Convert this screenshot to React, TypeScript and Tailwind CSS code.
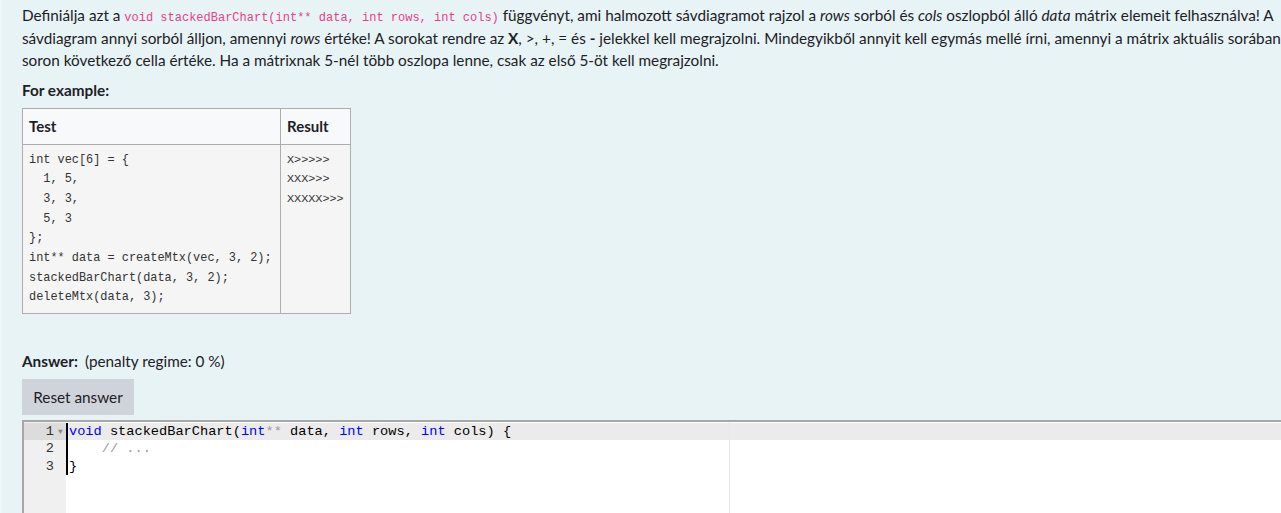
import React from "react";

const body = "font-['Lato','Liberation_Sans',sans-serif]";
const mono = "font-['Liberation_Mono',monospace]";

const testCode = [
  "int vec[6] = {",
  "  1, 5,",
  "  3, 3,",
  "  5, 3",
  "};",
  "int** data = createMtx(vec, 3, 2);",
  "stackedBarChart(data, 3, 2);",
  "deleteMtx(data, 3);",
];

const results = ["X>>>>>", "XXX>>>", "XXXXX>>>"];

const App: React.FC = () => {
  return (
    <div className={`flex h-[513px] w-[1281px] overflow-hidden bg-white ${body}`}>
      <div className="w-[2px] shrink-0 bg-[#eef6f8]" />
      <div className="flex-1 min-w-0 bg-[#e7f3f5] pl-[20px] pt-[4px] text-[#1d2125]">
        {/* question text */}
        <div className="text-[15.3px] leading-[22.5px] whitespace-nowrap">
          <div className="h-[22.5px]">
            Definiálja azt a{" "}
            <code className={`${mono} text-[12px] leading-none text-[#e83e8c]`}>
              void stackedBarChart(int** data, int rows, int cols)
            </code>{" "}
            függvényt, ami halmozott sávdiagramot rajzol a <i>rows</i> sorból és <i>cols</i> oszlopból álló{" "}
            <i>data</i> mátrix elemeit felhasználva! A
          </div>
          <div className="h-[22.5px]">
            sávdiagram annyi sorból álljon, amennyi <i>rows</i> értéke! A sorokat rendre az <b>X</b>, &gt;, +, = és{" "}
            <b>-</b> jelekkel kell megrajzolni. Mindegyikből annyit kell egymás mellé írni, amennyi a mátrix aktuális
            sorában
          </div>
          <div className="h-[22.5px]">
            soron következő cella értéke. Ha a mátrixnak 5-nél több oszlopa lenne, csak az első 5-öt kell megrajzolni.
          </div>
        </div>

        <div className="mt-[8px] text-[15.3px] font-bold leading-[20px]">For example:</div>

        {/* example table */}
        <table className="mt-[8px] border-collapse border border-[#adadad] text-left">
          <thead>
            <tr className="bg-[#f8f9fa]">
              <th className="h-[36px] w-[258px] border border-[#adadad] px-[6px] text-[15px] font-bold">Test</th>
              <th className="h-[36px] w-[70px] border border-[#adadad] px-[6px] text-[15px] font-bold">Result</th>
            </tr>
          </thead>
          <tbody>
            <tr className="bg-[#f5f5f5] align-top">
              <td className="border border-[#adadad] px-[6px] pt-[6px] pb-[5px]">
                <pre className={`${mono} m-0 text-[11.9px] leading-[19.7px] text-[#333]`}>
                  {testCode.join("\n")}
                </pre>
              </td>
              <td className="border border-[#adadad] px-[6px] pt-[6px]">
                <pre className={`${mono} m-0 text-[11.8px] leading-[19.7px] text-[#333]`}>
                  {results.join("\n")}
                </pre>
              </td>
            </tr>
          </tbody>
        </table>

        {/* answer */}
        <div className="mt-[37px] flex items-baseline gap-[7px] text-[15.3px] leading-[20px]">
          <span className="font-bold">Answer:</span>
          <span>(penalty regime: 0 %)</span>
        </div>
        <button className="mt-[8px] h-[36px] w-[112px] bg-[#ced4da] text-[15.3px] text-[#1d2125]">
          Reset answer
        </button>

        {/* code editor */}
        <div className={`mt-[5px] flex h-[100px] border-t-2 border-l-2 border-[#a7a7a7] bg-white ${mono} text-[13.65px] leading-[17.3px]`}>
          <div className="w-[42px] shrink-0 bg-[#f0f0f0] pt-[1px] text-[#333]">
            {[1, 2, 3].map((n) => (
              <div
                key={n}
                className={`flex h-[17.3px] items-center justify-end pr-[1px] ${n === 1 ? "bg-[#dcdcdc]" : ""}`}
              >
                <span>{n}</span>
                <span className="ml-[2px] w-[9px] text-center text-[8px] text-[#888]">{n === 1 ? "▼" : ""}</span>
              </div>
            ))}
          </div>
          <div className="relative flex-1 pt-[1px]">
            <div className="absolute left-0 top-[1px] h-[52px] w-[1.5px] bg-black" />
            <div className="absolute left-[663px] top-0 h-full w-px bg-[#e8e8e8]" />
            <div className="h-[17.3px] whitespace-pre bg-[#ebebeb] pl-[3px] text-black">
              <span className="text-[#0000ff]">void</span> stackedBarChart(<span className="text-[#0000ff]">int</span>
              <span className="text-[#999]">**</span> data, <span className="text-[#0000ff]">int</span> rows,{" "}
              <span className="text-[#0000ff]">int</span> cols) {"{"}
            </div>
            <div className="h-[17.3px] whitespace-pre pl-[3px] text-[#999]">{"    // ..."}</div>
            <div className="h-[17.3px] whitespace-pre pl-[3px] text-black">{"}"}</div>
          </div>
        </div>
      </div>
    </div>
  );
};

export default App;
